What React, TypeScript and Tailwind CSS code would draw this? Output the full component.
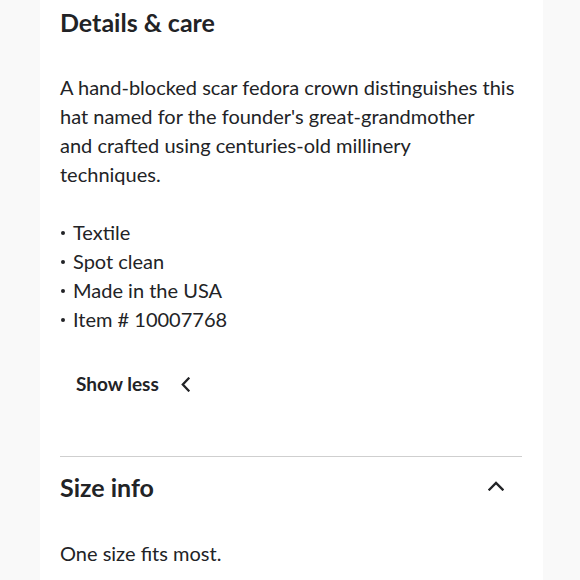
const bullets = ['Textile', 'Spot clean', 'Made in the USA', 'Item # 10007768'];

export default function App() {
  return (
    <div className="min-h-[580px] w-[580px] bg-[#f9f9f9] font-['Lato',sans-serif] text-[#222326]">
      <div className="ml-10 min-h-[580px] w-[503px] bg-white px-5 pt-[6px]">
        {/* Details & care */}
        <h2 className="text-[25px] leading-[32px] font-bold">Details &amp; care</h2>

        <p className="mt-[35px] text-[20px] leading-[29px]">
          A hand-blocked scar fedora crown distinguishes this
          <br />
          hat named for the founder's great-grandmother
          <br />
          and crafted using centuries-old millinery
          <br />
          techniques.
        </p>

        <ul className="mt-[29px] text-[20px] leading-[29px]">
          {bullets.map((b) => (
            <li key={b} className="flex items-center">
              <span className="ml-[1px] mr-[8px] inline-block h-[4px] w-[4px] rounded-full bg-[#222326]" />
              {b}
            </li>
          ))}
        </ul>

        <button className="mt-[36px] ml-4 flex items-center gap-[22px] text-[19px] leading-[28px] font-bold">
          Show less
          <svg width="9" height="15" viewBox="0 0 9 15" fill="none" stroke="currentColor" strokeWidth="2.3" strokeLinecap="square">
            <polyline points="7.5,1.5 1.8,7.5 7.5,13.5" />
          </svg>
        </button>

        <div className="mt-[58px] mr-[1px] border-t border-[#cfcfcf]" />

        {/* Size info */}
        <div className="mt-[14px] flex items-center justify-between">
          <h2 className="text-[25px] leading-[32px] font-bold">Size info</h2>
          <svg className="mr-[19px] -mt-[2px]" width="16" height="10" viewBox="0 0 16 10" fill="none" stroke="currentColor" strokeWidth="2.3" strokeLinecap="square">
            <polyline points="1.5,8.5 8,2 14.5,8.5" />
          </svg>
        </div>

        <p className="mt-[36px] text-[20px] leading-[29px]">One size fits most.</p>
      </div>
    </div>
  );
}
